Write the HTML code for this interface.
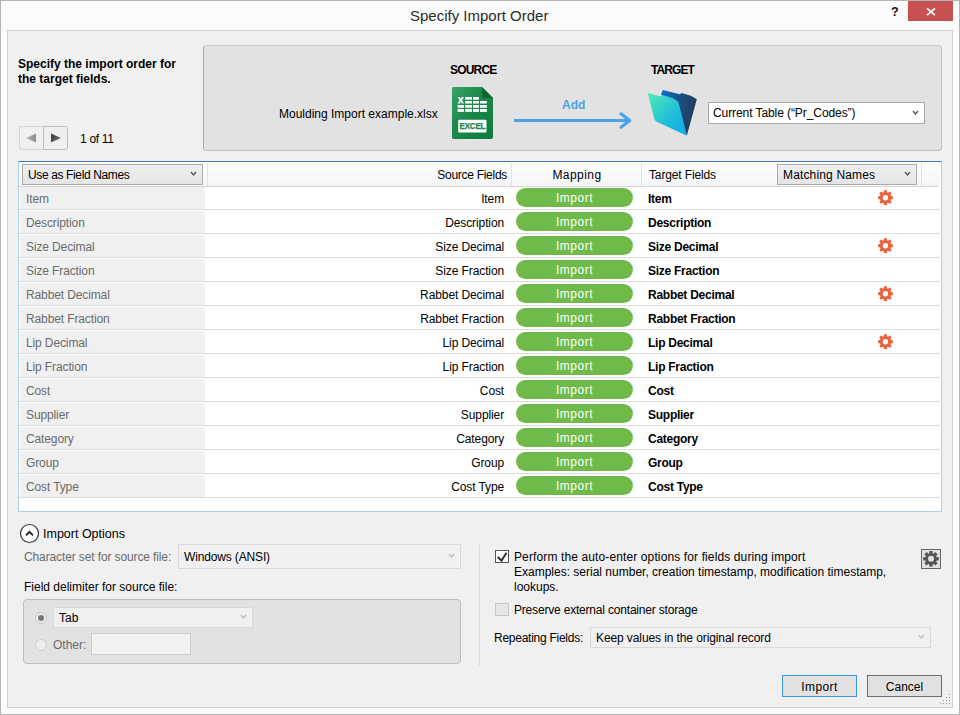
<!DOCTYPE html><html><head><meta charset='utf-8'><style>
*{margin:0;padding:0;box-sizing:border-box}
html,body{width:960px;height:715px;overflow:hidden;background:#fbfbfb;font-family:"Liberation Sans", sans-serif;font-size:12px;color:#000}
.a{position:absolute}
.t{position:absolute;white-space:nowrap;line-height:14px;font-size:12px}
.b{font-weight:bold}
.g{color:#6b6b6b}
.dd{position:absolute;border:1px solid #acacac;background:linear-gradient(#f0f0f0,#e5e5e5)}
.pill{position:absolute;left:516px;width:117px;height:19px;border-radius:10px;background:#6fba48}
</style></head><body>
<div class='a' style='left:0;top:0;width:960px;height:715px;border:1px solid #b4b4b4'></div>
<div class='t ' style='left:410px;top:7px;font-size:15px;line-height:18px;color:#2b2b2b'>Specify Import Order</div>
<div class='t b' style='left:891px;top:4px;font-size:12.5px;line-height:16px;color:#111'>?</div>
<div class='a' style='left:908px;top:1px;width:45px;height:20px;background:#c75050'></div>
<svg class='a' style='left:925px;top:7px' width='12' height='10'><path d='M2 1.3 L10 8.1 M10 1.3 L2 8.1' stroke='#fff' stroke-width='1.7'/></svg>
<div class='a' style='left:7px;top:30px;width:946px;height:678px;background:#f0f0f0;border:1px solid #d2d2d2'></div>
<div class='t b' style='left:18px;top:57px;line-height:15px'>Specify the import order for<br>the target fields.</div>
<div class='a' style='left:19px;top:126px;width:25px;height:24px;border:1px solid #d6d6d6;border-right:none;border-radius:3px 0 0 3px;background:#f0f0f0'></div>
<div class='a' style='left:43px;top:126px;width:25px;height:24px;border:1px solid #bdbdbd;border-radius:0 3px 3px 0;background:#efefef'></div>
<svg class='a' style='left:24px;top:132px' width='16' height='13'><defs><linearGradient id='la' x1='0' y1='0' x2='1' y2='0'><stop offset='0' stop-color='#b0b0b0'/><stop offset='1' stop-color='#909090'/></linearGradient></defs><path d='M2 6 L12 1.5 L12 10.5 Z' fill='url(#la)'/></svg>
<svg class='a' style='left:49px;top:132px' width='16' height='13'><defs><linearGradient id='ra' x1='0' y1='0' x2='1' y2='1'><stop offset='0' stop-color='#333'/><stop offset='1' stop-color='#7a7a7a'/></linearGradient></defs><path d='M12 6 L2 1.5 L2 10.5 Z' fill='url(#ra)'/></svg>
<div class='t ' style='left:80px;top:132px;letter-spacing:-0.3px;'>1 of 11</div>
<div class='a' style='left:203px;top:45px;width:739px;height:106px;background:#e2e2e2;border:1px solid #c0c0c0;border-top-color:#cbcbcb;border-left-color:#acacac;border-radius:3.5px'></div>
<div class='t b' style='left:450px;top:63px;letter-spacing:-0.8px;'>SOURCE</div>
<div class='t b' style='left:651px;top:63px;letter-spacing:-0.9px;'>TARGET</div>
<div class='t ' style='left:279px;top:107px;'>Moulding Import example.xlsx</div>
<svg class='a' style='left:451px;top:86px' width='43' height='54'>
<defs><linearGradient id='xg' x1='0' y1='0' x2='1' y2='1'><stop offset='0' stop-color='#3aa36a'/><stop offset='0.4' stop-color='#1d8a4c'/><stop offset='1' stop-color='#0e7a3c'/></linearGradient></defs>
<path d='M2 1 H31 L42 12 V51 Q42 53 40 53 H2 Q1 53 1 51 V3 Q1 1 2 1 Z' fill='url(#xg)'/>
<path d='M31 1 L42 12 H33 Q31 12 31 10 Z' fill='#0b6630'/>
<g fill='#fff'>
<path d='M6.6 11 L8.8 11 L9.8 12.8 L10.8 11 L13 11 L11 14.2 L13 17.4 L10.8 17.4 L9.8 15.6 L8.8 17.4 L6.6 17.4 L8.6 14.2 Z'/>
<rect x='14.2' y='11' width='6.8' height='2.7'/><rect x='22' y='11' width='6' height='2.7'/>
<rect x='14.2' y='15' width='6.8' height='2.5'/><rect x='22' y='15' width='6' height='2.5'/><rect x='29' y='15' width='6.8' height='2.5'/>
<rect x='6.6' y='19' width='6.3' height='2.8'/><rect x='14.2' y='19' width='6.8' height='2.8'/><rect x='22' y='19' width='6' height='2.8'/><rect x='29' y='19' width='6.8' height='2.8'/>
<rect x='6.6' y='23' width='6.3' height='2.9'/><rect x='14.2' y='23' width='6.8' height='2.9'/><rect x='22' y='23' width='6' height='2.9'/><rect x='29' y='23' width='6.8' height='2.9'/>
<rect x='7.2' y='33.8' width='28.3' height='12.6' rx='1'/>
</g>
<text x='21.4' y='42.9' font-family='Liberation Sans' font-weight='bold' font-size='8.2' letter-spacing='-0.3' fill='#1e8a4c' stroke='#1e8a4c' stroke-width='0.25' text-anchor='middle'>EXCEL</text>
</svg>
<div class='t b' style='left:562px;top:98px;color:#4ba2e8'>Add</div>
<svg class='a' style='left:510px;top:110px' width='126' height='20'><path d='M4 10.5 H119' stroke='#47a2ea' stroke-width='3'/><path d='M111 3.8 L119.8 10.5 L111 17.2' stroke='#47a2ea' stroke-width='3.1' fill='none' stroke-linecap='round' stroke-linejoin='round'/></svg>
<svg class='a' style='left:640px;top:84px' width='64' height='56'>
<defs><linearGradient id='fb' x1='0' y1='0' x2='1' y2='0.3'><stop offset='0' stop-color='#0a72cf'/><stop offset='0.55' stop-color='#1a4f86'/><stop offset='1' stop-color='#243c58'/></linearGradient>
<linearGradient id='ff' x1='0' y1='0' x2='1' y2='1'><stop offset='0' stop-color='#52ecb6'/><stop offset='0.55' stop-color='#22bfd8'/><stop offset='1' stop-color='#0ea8ef'/></linearGradient></defs>
<path d='M21.1 10.2 L22.7 6.1 L39.9 10.2 L41.5 9 L50.9 11.7 L56.8 15.3 L47 50.9 Z' fill='url(#fb)'/>
<path d='M7.8 9 L21.1 12.5 L22.7 11 L33.7 14.5 L38.4 18 L47 51.7 L15.7 37.2 L14.1 34.5 Z' fill='url(#ff)'/>
</svg>
<div class='a' style='left:708px;top:102px;width:217px;height:22px;background:#fff;border:1px solid #a9abb0'></div>
<div class='t ' style='left:713px;top:106px;letter-spacing:-0.08px;'>Current Table (“Pr_Codes”)</div>
<svg class='a' style='left:912.3px;top:110px' width='7' height='5.9'><path d='M1 1 L3.5 3.9 L6 1' stroke='#555' stroke-width='1.35' fill='none'/></svg>
<div class='a' style='left:18px;top:161px;width:924px;height:351px;background:#fff;border:1px solid #add0ec;border-top-color:#3f7bb8'></div>
<div class='a' style='left:19px;top:162px;width:921px;height:24px;background:linear-gradient(#ffffff,#f4f5f6)'></div>
<div class='a' style='left:19px;top:186px;width:919px;height:1px;background:#d5d5d5'></div>
<div class='a' style='left:207px;top:163px;width:1px;height:23px;background:#e3e3e3'></div>
<div class='a' style='left:511px;top:163px;width:1px;height:23px;background:#e3e3e3'></div>
<div class='a' style='left:641px;top:163px;width:1px;height:23px;background:#e3e3e3'></div>
<div class='a' style='left:921px;top:163px;width:1px;height:23px;background:#e3e3e3'></div>
<div class='dd' style='left:22px;top:164px;width:181px;height:21px'></div>
<div class='t ' style='left:28px;top:168px;letter-spacing:-0.37px;'>Use as Field Names</div>
<svg class='a' style='left:190px;top:171px' width='7' height='5.9'><path d='M1 1 L3.5 3.9 L6 1' stroke='#555' stroke-width='1.35' fill='none'/></svg>
<div class='t ' style='left:400px;top:168px;letter-spacing:-0.28px;width:107px;text-align:right;'>Source Fields</div>
<div class='t ' style='left:512px;top:168px;letter-spacing:0.45px;width:130px;text-align:center;'>Mapping</div>
<div class='t ' style='left:649px;top:168px;letter-spacing:-0.14px;'>Target Fields</div>
<div class='dd' style='left:777px;top:164px;width:140px;height:21px'></div>
<div class='t ' style='left:783px;top:168px;letter-spacing:0.15px;'>Matching Names</div>
<svg class='a' style='left:904px;top:171px' width='7' height='5.9'><path d='M1 1 L3.5 3.9 L6 1' stroke='#555' stroke-width='1.35' fill='none'/></svg>
<div class='a' style='left:20px;top:187px;width:185px;height:22px;background:#f0f0f0'></div>
<div class='a' style='left:19px;top:209px;width:921px;height:1px;background:#dcdcdc'></div>
<div class='t g' style='left:26px;top:192px;letter-spacing:-0.12px;'>Item</div>
<div class='t ' style='left:300px;top:192px;letter-spacing:-0.1px;width:204.1px;text-align:right;'>Item</div>
<div class='pill' style='top:188px'></div>
<div class='t ' style='left:516px;top:191px;letter-spacing:0.5px;width:117px;text-align:center;color:#fff'>Import</div>
<div class='t b' style='left:648px;top:192px;letter-spacing:-0.26px;'>Item</div>
<svg class='a' style='left:876px;top:188px' width='19' height='19'><g transform='translate(9.50 9.70)'><circle r='5.6' fill='#e8643a'/><rect x='-1.6' y='-7.4' width='3.2' height='3.3000000000000007' fill='#e8643a' transform='rotate(0.0)'/><rect x='-1.6' y='-7.4' width='3.2' height='3.3000000000000007' fill='#e8643a' transform='rotate(45.0)'/><rect x='-1.6' y='-7.4' width='3.2' height='3.3000000000000007' fill='#e8643a' transform='rotate(90.0)'/><rect x='-1.6' y='-7.4' width='3.2' height='3.3000000000000007' fill='#e8643a' transform='rotate(135.0)'/><rect x='-1.6' y='-7.4' width='3.2' height='3.3000000000000007' fill='#e8643a' transform='rotate(180.0)'/><rect x='-1.6' y='-7.4' width='3.2' height='3.3000000000000007' fill='#e8643a' transform='rotate(225.0)'/><rect x='-1.6' y='-7.4' width='3.2' height='3.3000000000000007' fill='#e8643a' transform='rotate(270.0)'/><rect x='-1.6' y='-7.4' width='3.2' height='3.3000000000000007' fill='#e8643a' transform='rotate(315.0)'/><circle r='2.7' fill='#fff'/></g></svg>
<div class='a' style='left:20px;top:211px;width:185px;height:22px;background:#f0f0f0'></div>
<div class='a' style='left:19px;top:233px;width:921px;height:1px;background:#dcdcdc'></div>
<div class='t g' style='left:26px;top:216px;letter-spacing:-0.12px;'>Description</div>
<div class='t ' style='left:300px;top:216px;letter-spacing:-0.1px;width:204.1px;text-align:right;'>Description</div>
<div class='pill' style='top:212px'></div>
<div class='t ' style='left:516px;top:215px;letter-spacing:0.5px;width:117px;text-align:center;color:#fff'>Import</div>
<div class='t b' style='left:648px;top:216px;letter-spacing:-0.26px;'>Description</div>
<div class='a' style='left:20px;top:235px;width:185px;height:22px;background:#f0f0f0'></div>
<div class='a' style='left:19px;top:257px;width:921px;height:1px;background:#dcdcdc'></div>
<div class='t g' style='left:26px;top:240px;letter-spacing:-0.12px;'>Size Decimal</div>
<div class='t ' style='left:300px;top:240px;letter-spacing:-0.1px;width:204.1px;text-align:right;'>Size Decimal</div>
<div class='pill' style='top:236px'></div>
<div class='t ' style='left:516px;top:239px;letter-spacing:0.5px;width:117px;text-align:center;color:#fff'>Import</div>
<div class='t b' style='left:648px;top:240px;letter-spacing:-0.26px;'>Size Decimal</div>
<svg class='a' style='left:876px;top:236px' width='19' height='19'><g transform='translate(9.50 9.70)'><circle r='5.6' fill='#e8643a'/><rect x='-1.6' y='-7.4' width='3.2' height='3.3000000000000007' fill='#e8643a' transform='rotate(0.0)'/><rect x='-1.6' y='-7.4' width='3.2' height='3.3000000000000007' fill='#e8643a' transform='rotate(45.0)'/><rect x='-1.6' y='-7.4' width='3.2' height='3.3000000000000007' fill='#e8643a' transform='rotate(90.0)'/><rect x='-1.6' y='-7.4' width='3.2' height='3.3000000000000007' fill='#e8643a' transform='rotate(135.0)'/><rect x='-1.6' y='-7.4' width='3.2' height='3.3000000000000007' fill='#e8643a' transform='rotate(180.0)'/><rect x='-1.6' y='-7.4' width='3.2' height='3.3000000000000007' fill='#e8643a' transform='rotate(225.0)'/><rect x='-1.6' y='-7.4' width='3.2' height='3.3000000000000007' fill='#e8643a' transform='rotate(270.0)'/><rect x='-1.6' y='-7.4' width='3.2' height='3.3000000000000007' fill='#e8643a' transform='rotate(315.0)'/><circle r='2.7' fill='#fff'/></g></svg>
<div class='a' style='left:20px;top:259px;width:185px;height:22px;background:#f0f0f0'></div>
<div class='a' style='left:19px;top:281px;width:921px;height:1px;background:#dcdcdc'></div>
<div class='t g' style='left:26px;top:264px;letter-spacing:-0.12px;'>Size Fraction</div>
<div class='t ' style='left:300px;top:264px;letter-spacing:-0.1px;width:204.1px;text-align:right;'>Size Fraction</div>
<div class='pill' style='top:260px'></div>
<div class='t ' style='left:516px;top:263px;letter-spacing:0.5px;width:117px;text-align:center;color:#fff'>Import</div>
<div class='t b' style='left:648px;top:264px;letter-spacing:-0.26px;'>Size Fraction</div>
<div class='a' style='left:20px;top:283px;width:185px;height:22px;background:#f0f0f0'></div>
<div class='a' style='left:19px;top:305px;width:921px;height:1px;background:#dcdcdc'></div>
<div class='t g' style='left:26px;top:288px;letter-spacing:-0.12px;'>Rabbet Decimal</div>
<div class='t ' style='left:300px;top:288px;letter-spacing:-0.1px;width:204.1px;text-align:right;'>Rabbet Decimal</div>
<div class='pill' style='top:284px'></div>
<div class='t ' style='left:516px;top:287px;letter-spacing:0.5px;width:117px;text-align:center;color:#fff'>Import</div>
<div class='t b' style='left:648px;top:288px;letter-spacing:-0.26px;'>Rabbet Decimal</div>
<svg class='a' style='left:876px;top:284px' width='19' height='19'><g transform='translate(9.50 9.70)'><circle r='5.6' fill='#e8643a'/><rect x='-1.6' y='-7.4' width='3.2' height='3.3000000000000007' fill='#e8643a' transform='rotate(0.0)'/><rect x='-1.6' y='-7.4' width='3.2' height='3.3000000000000007' fill='#e8643a' transform='rotate(45.0)'/><rect x='-1.6' y='-7.4' width='3.2' height='3.3000000000000007' fill='#e8643a' transform='rotate(90.0)'/><rect x='-1.6' y='-7.4' width='3.2' height='3.3000000000000007' fill='#e8643a' transform='rotate(135.0)'/><rect x='-1.6' y='-7.4' width='3.2' height='3.3000000000000007' fill='#e8643a' transform='rotate(180.0)'/><rect x='-1.6' y='-7.4' width='3.2' height='3.3000000000000007' fill='#e8643a' transform='rotate(225.0)'/><rect x='-1.6' y='-7.4' width='3.2' height='3.3000000000000007' fill='#e8643a' transform='rotate(270.0)'/><rect x='-1.6' y='-7.4' width='3.2' height='3.3000000000000007' fill='#e8643a' transform='rotate(315.0)'/><circle r='2.7' fill='#fff'/></g></svg>
<div class='a' style='left:20px;top:307px;width:185px;height:22px;background:#f0f0f0'></div>
<div class='a' style='left:19px;top:329px;width:921px;height:1px;background:#dcdcdc'></div>
<div class='t g' style='left:26px;top:312px;letter-spacing:-0.12px;'>Rabbet Fraction</div>
<div class='t ' style='left:300px;top:312px;letter-spacing:-0.1px;width:204.1px;text-align:right;'>Rabbet Fraction</div>
<div class='pill' style='top:308px'></div>
<div class='t ' style='left:516px;top:311px;letter-spacing:0.5px;width:117px;text-align:center;color:#fff'>Import</div>
<div class='t b' style='left:648px;top:312px;letter-spacing:-0.26px;'>Rabbet Fraction</div>
<div class='a' style='left:20px;top:331px;width:185px;height:22px;background:#f0f0f0'></div>
<div class='a' style='left:19px;top:353px;width:921px;height:1px;background:#dcdcdc'></div>
<div class='t g' style='left:26px;top:336px;letter-spacing:-0.12px;'>Lip Decimal</div>
<div class='t ' style='left:300px;top:336px;letter-spacing:-0.1px;width:204.1px;text-align:right;'>Lip Decimal</div>
<div class='pill' style='top:332px'></div>
<div class='t ' style='left:516px;top:335px;letter-spacing:0.5px;width:117px;text-align:center;color:#fff'>Import</div>
<div class='t b' style='left:648px;top:336px;letter-spacing:-0.26px;'>Lip Decimal</div>
<svg class='a' style='left:876px;top:332px' width='19' height='19'><g transform='translate(9.50 9.70)'><circle r='5.6' fill='#e8643a'/><rect x='-1.6' y='-7.4' width='3.2' height='3.3000000000000007' fill='#e8643a' transform='rotate(0.0)'/><rect x='-1.6' y='-7.4' width='3.2' height='3.3000000000000007' fill='#e8643a' transform='rotate(45.0)'/><rect x='-1.6' y='-7.4' width='3.2' height='3.3000000000000007' fill='#e8643a' transform='rotate(90.0)'/><rect x='-1.6' y='-7.4' width='3.2' height='3.3000000000000007' fill='#e8643a' transform='rotate(135.0)'/><rect x='-1.6' y='-7.4' width='3.2' height='3.3000000000000007' fill='#e8643a' transform='rotate(180.0)'/><rect x='-1.6' y='-7.4' width='3.2' height='3.3000000000000007' fill='#e8643a' transform='rotate(225.0)'/><rect x='-1.6' y='-7.4' width='3.2' height='3.3000000000000007' fill='#e8643a' transform='rotate(270.0)'/><rect x='-1.6' y='-7.4' width='3.2' height='3.3000000000000007' fill='#e8643a' transform='rotate(315.0)'/><circle r='2.7' fill='#fff'/></g></svg>
<div class='a' style='left:20px;top:355px;width:185px;height:22px;background:#f0f0f0'></div>
<div class='a' style='left:19px;top:377px;width:921px;height:1px;background:#dcdcdc'></div>
<div class='t g' style='left:26px;top:360px;letter-spacing:-0.12px;'>Lip Fraction</div>
<div class='t ' style='left:300px;top:360px;letter-spacing:-0.1px;width:204.1px;text-align:right;'>Lip Fraction</div>
<div class='pill' style='top:356px'></div>
<div class='t ' style='left:516px;top:359px;letter-spacing:0.5px;width:117px;text-align:center;color:#fff'>Import</div>
<div class='t b' style='left:648px;top:360px;letter-spacing:-0.26px;'>Lip Fraction</div>
<div class='a' style='left:20px;top:379px;width:185px;height:22px;background:#f0f0f0'></div>
<div class='a' style='left:19px;top:401px;width:921px;height:1px;background:#dcdcdc'></div>
<div class='t g' style='left:26px;top:384px;letter-spacing:-0.12px;'>Cost</div>
<div class='t ' style='left:300px;top:384px;letter-spacing:-0.1px;width:204.1px;text-align:right;'>Cost</div>
<div class='pill' style='top:380px'></div>
<div class='t ' style='left:516px;top:383px;letter-spacing:0.5px;width:117px;text-align:center;color:#fff'>Import</div>
<div class='t b' style='left:648px;top:384px;letter-spacing:-0.26px;'>Cost</div>
<div class='a' style='left:20px;top:403px;width:185px;height:22px;background:#f0f0f0'></div>
<div class='a' style='left:19px;top:425px;width:921px;height:1px;background:#dcdcdc'></div>
<div class='t g' style='left:26px;top:408px;letter-spacing:-0.12px;'>Supplier</div>
<div class='t ' style='left:300px;top:408px;letter-spacing:-0.1px;width:204.1px;text-align:right;'>Supplier</div>
<div class='pill' style='top:404px'></div>
<div class='t ' style='left:516px;top:407px;letter-spacing:0.5px;width:117px;text-align:center;color:#fff'>Import</div>
<div class='t b' style='left:648px;top:408px;letter-spacing:-0.26px;'>Supplier</div>
<div class='a' style='left:20px;top:427px;width:185px;height:22px;background:#f0f0f0'></div>
<div class='a' style='left:19px;top:449px;width:921px;height:1px;background:#dcdcdc'></div>
<div class='t g' style='left:26px;top:432px;letter-spacing:-0.12px;'>Category</div>
<div class='t ' style='left:300px;top:432px;letter-spacing:-0.1px;width:204.1px;text-align:right;'>Category</div>
<div class='pill' style='top:428px'></div>
<div class='t ' style='left:516px;top:431px;letter-spacing:0.5px;width:117px;text-align:center;color:#fff'>Import</div>
<div class='t b' style='left:648px;top:432px;letter-spacing:-0.26px;'>Category</div>
<div class='a' style='left:20px;top:451px;width:185px;height:22px;background:#f0f0f0'></div>
<div class='a' style='left:19px;top:473px;width:921px;height:1px;background:#dcdcdc'></div>
<div class='t g' style='left:26px;top:456px;letter-spacing:-0.12px;'>Group</div>
<div class='t ' style='left:300px;top:456px;letter-spacing:-0.1px;width:204.1px;text-align:right;'>Group</div>
<div class='pill' style='top:452px'></div>
<div class='t ' style='left:516px;top:455px;letter-spacing:0.5px;width:117px;text-align:center;color:#fff'>Import</div>
<div class='t b' style='left:648px;top:456px;letter-spacing:-0.26px;'>Group</div>
<div class='a' style='left:20px;top:475px;width:185px;height:22px;background:#f0f0f0'></div>
<div class='a' style='left:19px;top:497px;width:921px;height:1px;background:#dcdcdc'></div>
<div class='t g' style='left:26px;top:480px;letter-spacing:-0.12px;'>Cost Type</div>
<div class='t ' style='left:300px;top:480px;letter-spacing:-0.1px;width:204.1px;text-align:right;'>Cost Type</div>
<div class='pill' style='top:476px'></div>
<div class='t ' style='left:516px;top:479px;letter-spacing:0.5px;width:117px;text-align:center;color:#fff'>Import</div>
<div class='t b' style='left:648px;top:480px;letter-spacing:-0.26px;'>Cost Type</div>
<svg class='a' style='left:19px;top:523px' width='21' height='21'><circle cx='10.5' cy='10.5' r='9' fill='#fff' stroke='#333' stroke-width='1.2'/><path d='M7 12.4 L10.5 8.9 L14 12.4' stroke='#222' stroke-width='1.9' fill='none'/></svg>
<div class='t ' style='left:43px;top:527px;font-size:12.5px'>Import Options</div>
<div class='t g' style='left:24px;top:550px;letter-spacing:-0.12px;'>Character set for source file:</div>
<div class='a' style='left:178px;top:544px;width:283px;height:25px;background:#f0f0f0;border:1px solid #d9d9d9'></div>
<div class='t ' style='left:184px;top:550px;letter-spacing:-0.15px;'>Windows (ANSI)</div>
<svg class='a' style='left:448px;top:553px' width='7' height='5.9'><path d='M1 1 L3.5 3.9 L6 1' stroke='#bdbdbd' stroke-width='1.35' fill='none'/></svg>
<div class='t ' style='left:24px;top:580px;'>Field delimiter for source file:</div>
<div class='a' style='left:23px;top:599px;width:438px;height:65px;background:#e2e2e2;border:1px solid #bdbdbd;border-radius:4px'></div>
<div class='a' style='left:35px;top:612px;width:12px;height:12px;border-radius:50%;background:#ededed;border:1px solid #c4c4c4'></div>
<div class='a' style='left:38px;top:615px;width:6px;height:6px;border-radius:50%;background:#777'></div>
<div class='a' style='left:53px;top:607px;width:200px;height:21px;background:#f0f0f0;border:1px solid #d9d9d9'></div>
<div class='t ' style='left:59px;top:611px;'>Tab</div>
<svg class='a' style='left:240px;top:613.5px' width='7' height='5.9'><path d='M1 1 L3.5 3.9 L6 1' stroke='#bdbdbd' stroke-width='1.35' fill='none'/></svg>
<div class='a' style='left:35px;top:639px;width:12px;height:12px;border-radius:50%;background:#ededed;border:1px solid #cdcdcd'></div>
<div class='t g' style='left:53px;top:638px;'>Other:</div>
<div class='a' style='left:91px;top:633px;width:100px;height:22px;background:#f2f2f2;border:1px solid #cdcdcd'></div>
<div class='a' style='left:479px;top:545px;width:1px;height:121px;background:#dadada'></div>
<div class='a' style='left:495px;top:550px;width:14px;height:13px;background:#fff;border:1px solid #555'></div>
<svg class='a' style='left:495px;top:550px' width='14' height='14'><path d='M2.7 7 L6.5 10.6 L11.5 2.8' stroke='#333' stroke-width='2' fill='none'/></svg>
<div class='t' style='left:514px;top:550px;line-height:15px'><span style='letter-spacing:0.12px'>Perform the auto-enter options for fields during import</span><br>Examples: serial number, creation timestamp, modification timestamp,<br>lookups.</div>
<div class='a' style='left:495px;top:603px;width:14px;height:13px;background:#e6e6e6;border:1px solid #c6c6c6'></div>
<div class='t ' style='left:514px;top:603px;letter-spacing:-0.19px;'>Preserve external container storage</div>
<div class='t ' style='left:494px;top:631px;letter-spacing:-0.26px;'>Repeating Fields:</div>
<div class='a' style='left:590px;top:627px;width:341px;height:21px;background:#f0f0f0;border:1px solid #d9d9d9'></div>
<div class='t ' style='left:596px;top:631px;letter-spacing:-0.1px;'>Keep values in the original record</div>
<svg class='a' style='left:918px;top:634px' width='7' height='5.9'><path d='M1 1 L3.5 3.9 L6 1' stroke='#bdbdbd' stroke-width='1.35' fill='none'/></svg>
<div class='a' style='left:921px;top:549px;width:20px;height:20px;background:#e1e1e1;border:1px solid #666'></div>
<svg class='a' style='left:922px;top:549px' width='19' height='19'><g transform='translate(9.00 9.80)'><circle r='5.9' fill='#555'/><rect x='-1.65' y='-7.8' width='3.3' height='3.3999999999999995' fill='#555' transform='rotate(0.0)'/><rect x='-1.65' y='-7.8' width='3.3' height='3.3999999999999995' fill='#555' transform='rotate(45.0)'/><rect x='-1.65' y='-7.8' width='3.3' height='3.3999999999999995' fill='#555' transform='rotate(90.0)'/><rect x='-1.65' y='-7.8' width='3.3' height='3.3999999999999995' fill='#555' transform='rotate(135.0)'/><rect x='-1.65' y='-7.8' width='3.3' height='3.3999999999999995' fill='#555' transform='rotate(180.0)'/><rect x='-1.65' y='-7.8' width='3.3' height='3.3999999999999995' fill='#555' transform='rotate(225.0)'/><rect x='-1.65' y='-7.8' width='3.3' height='3.3999999999999995' fill='#555' transform='rotate(270.0)'/><rect x='-1.65' y='-7.8' width='3.3' height='3.3999999999999995' fill='#555' transform='rotate(315.0)'/><circle r='3.0' fill='#e1e1e1'/></g></svg>
<div class='a' style='left:782px;top:675px;width:75px;height:22px;background:#e1e1e1;border:1px solid #3d95e4'></div>
<div class='t ' style='left:782px;top:680px;letter-spacing:0.4px;width:75px;text-align:center;'>Import</div>
<div class='a' style='left:867px;top:675px;width:75px;height:22px;background:#e1e1e1;border:1px solid #6e6e6e'></div>
<div class='t ' style='left:867px;top:680px;width:75px;text-align:center;'>Cancel</div>
<div class='a' style='left:949px;top:694px;width:1px;height:1px;background:#8a9bb8'></div>
<div class='a' style='left:946px;top:697px;width:1px;height:1px;background:#8a9bb8'></div>
<div class='a' style='left:949px;top:697px;width:1px;height:1px;background:#8a9bb8'></div>
<div class='a' style='left:943px;top:700px;width:1px;height:1px;background:#8a9bb8'></div>
<div class='a' style='left:946px;top:700px;width:1px;height:1px;background:#8a9bb8'></div>
<div class='a' style='left:949px;top:700px;width:1px;height:1px;background:#8a9bb8'></div>
<div class='a' style='left:940px;top:703px;width:1px;height:1px;background:#8a9bb8'></div>
<div class='a' style='left:943px;top:703px;width:1px;height:1px;background:#8a9bb8'></div>
<div class='a' style='left:946px;top:703px;width:1px;height:1px;background:#8a9bb8'></div>
<div class='a' style='left:949px;top:703px;width:1px;height:1px;background:#8a9bb8'></div>
</body></html>
